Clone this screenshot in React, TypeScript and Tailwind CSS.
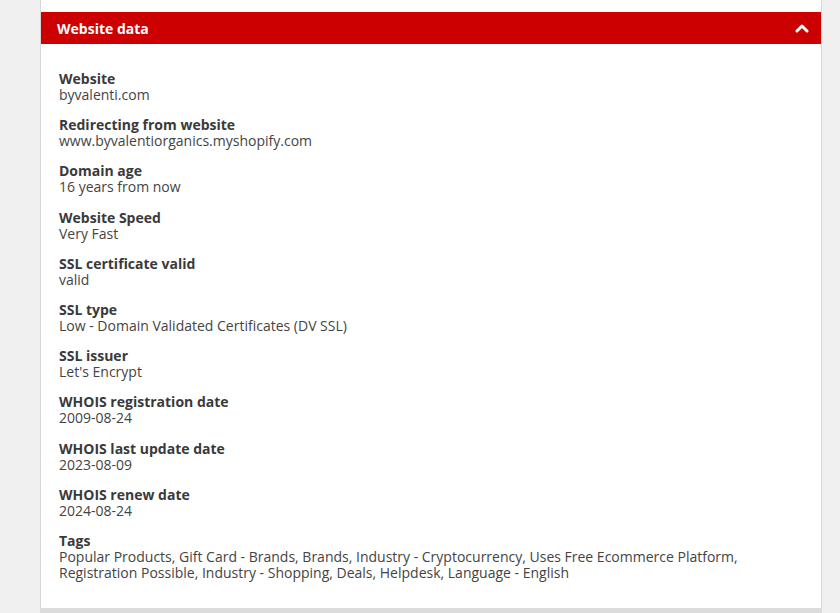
import React from "react";

const items: [string, string][] = [
  ["Website", "byvalenti.com"],
  ["Redirecting from website", "www.byvalentiorganics.myshopify.com"],
  ["Domain age", "16 years from now"],
  ["Website Speed", "Very Fast"],
  ["SSL certificate valid", "valid"],
  ["SSL type", "Low - Domain Validated Certificates (DV SSL)"],
  ["SSL issuer", "Let's Encrypt"],
  ["WHOIS registration date", "2009-08-24"],
  ["WHOIS last update date", "2023-08-09"],
  ["WHOIS renew date", "2024-08-24"],
  [
    "Tags",
    "Popular Products, Gift Card - Brands, Brands, Industry - Cryptocurrency, Uses Free Ecommerce Platform, Registration Possible, Industry - Shopping, Deals, Helpdesk, Language - English",
  ],
];

export default function App() {
  return (
    <div
      className="w-[840px] h-[613px] overflow-hidden bg-[#f0f0f0] text-[14px] text-[#444]"
      style={{ fontFamily: '"Open Sans", "Noto Sans", sans-serif' }}
    >
      <div className="ml-[40px] w-[782px] border-x border-[#d6d6d6] bg-white pt-[12px]">
        <div className="h-[32px] bg-[#cc0000] flex items-center justify-between pl-[16px] pr-[12px]">
          <span className="text-white font-bold text-[14px]">Website data</span>
          <svg width="14" height="10" viewBox="0 0 14 10">
            <path d="M2 8 L7 3 L12 8" fill="none" stroke="white" strokeWidth="3" strokeLinecap="round" strokeLinejoin="round" />
          </svg>
        </div>
        <div className="pl-[18px] pr-[60px] pt-[27px] pb-[27px]">
          {items.map(([label, value], i) => (
            <div key={i} className={i < items.length - 1 ? "mb-[14px]" : ""}>
              <div className="font-bold text-[#3a3a3a] leading-[16px]">{label}</div>
              <div className="leading-[16.2px]">{value}</div>
            </div>
          ))}
        </div>
      </div>
      <div className="ml-[40px] w-[782px] h-[20px] bg-[#dcdcdc]" />
    </div>
  );
}
